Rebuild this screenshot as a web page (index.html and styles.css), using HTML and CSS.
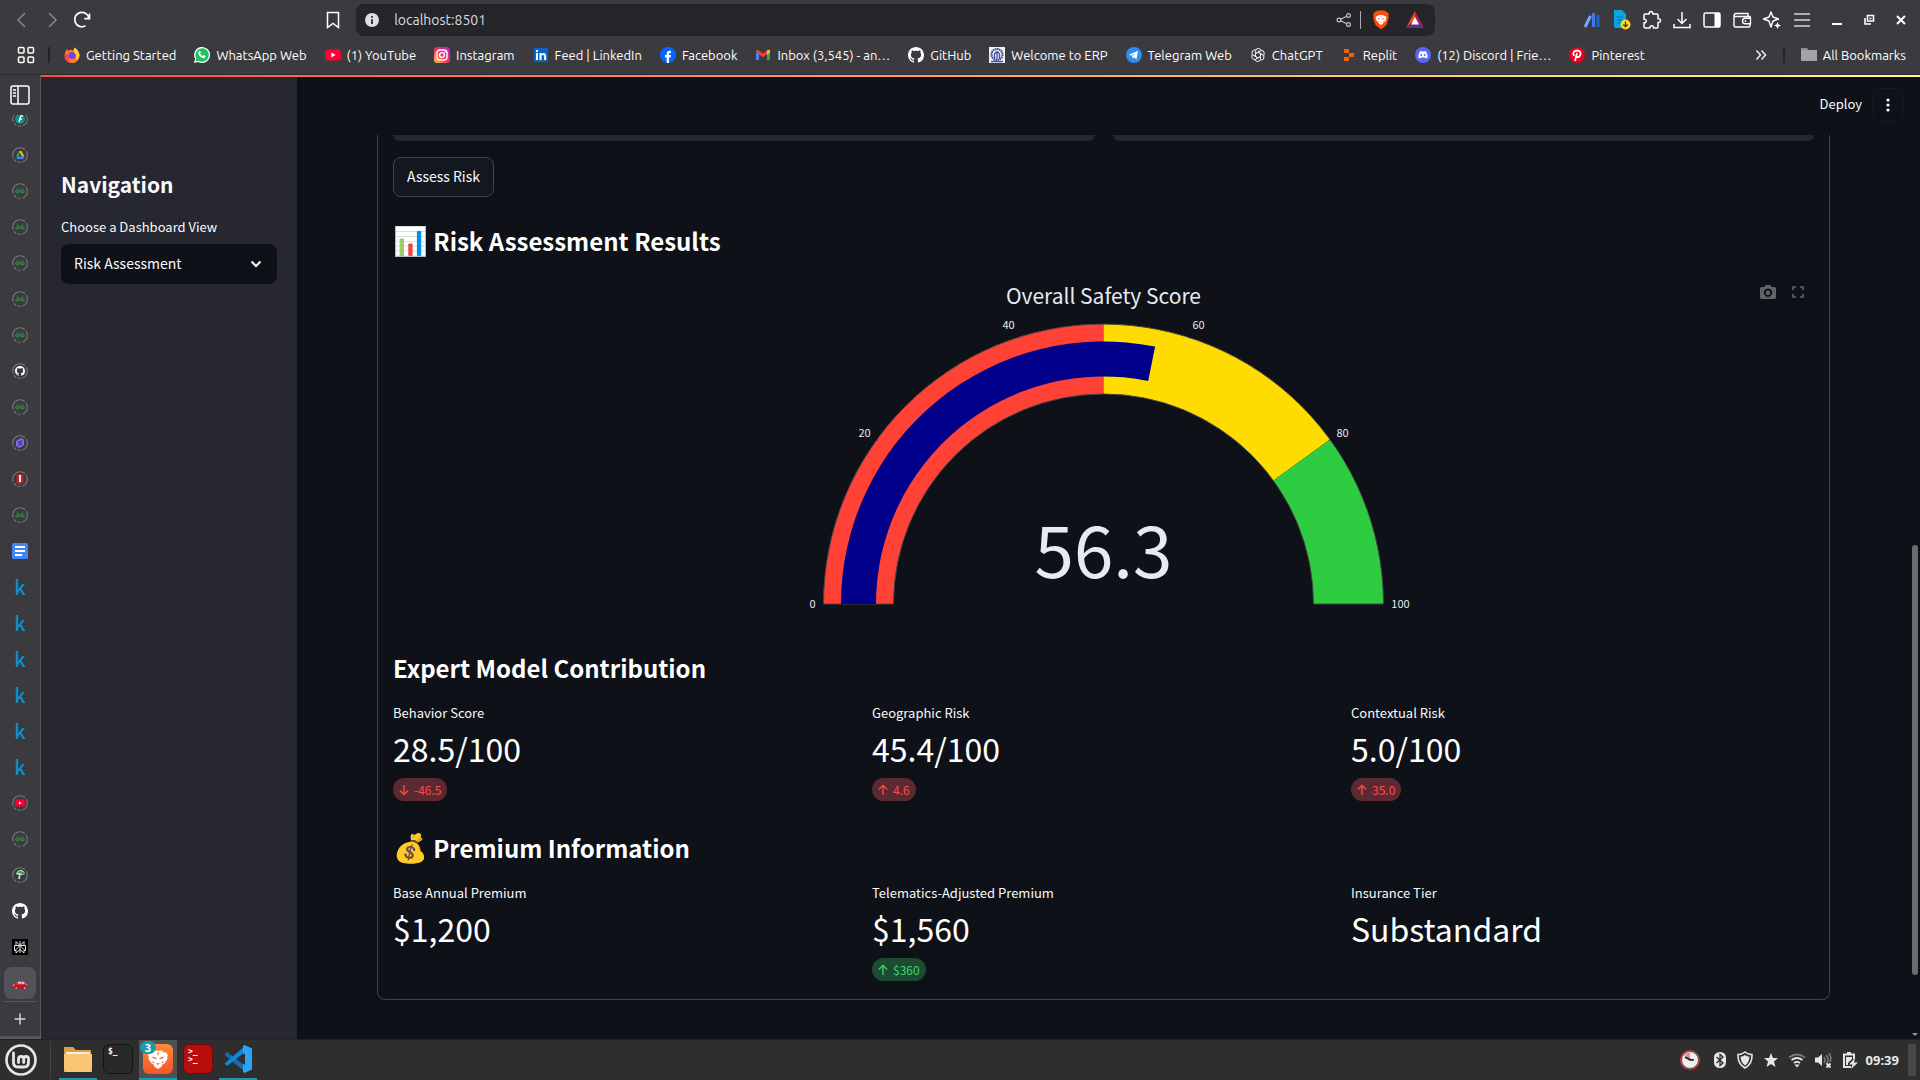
FILE: index.html
```html
<!DOCTYPE html>
<html lang="en">
<head>
<meta charset="utf-8">
<meta name="viewport" content="width=device-width, initial-scale=1">
<title>Risk Assessment</title>
<link rel="stylesheet" href="styles.css">
</head>
<body>
<svg class="sprite" aria-hidden="true">
  <symbol id="github" viewBox="0 0 16 16"><path fill="#fff" d="M8 0C3.58 0 0 3.58 0 8c0 3.54 2.29 6.53 5.47 7.59.4.07.55-.17.55-.38 0-.19-.01-.82-.01-1.49-2.01.37-2.53-.49-2.69-.94-.09-.23-.48-.94-.82-1.13-.28-.15-.68-.52-.01-.53.63-.01 1.08.58 1.23.82.72 1.21 1.87.87 2.33.66.07-.52.28-.87.51-1.07-1.78-.2-3.64-.89-3.64-3.95 0-.87.31-1.59.82-2.15-.08-.2-.36-1.02.08-2.12 0 0 .67-.21 2.2.82.64-.18 1.32-.27 2-.27s1.36.09 2 .27c1.53-1.04 2.2-.82 2.2-.82.44 1.1.16 1.92.08 2.12.51.56.82 1.27.82 2.15 0 3.07-1.87 3.75-3.65 3.95.29.25.54.73.54 1.48 0 1.07-.01 1.93-.01 2.2 0 .21.15.46.55.38A8.01 8.01 0 0 0 16 8c0-4.42-3.58-8-8-8z"/></symbol>
  <symbol id="ring" viewBox="0 0 16 16"><circle cx="8" cy="8" r="7.3" fill="none" stroke="#77777b" stroke-width="1.1" stroke-dasharray="9 1.6 3 1.6 3 1.6 20 1.6"/></symbol>
  <symbol id="gfg" viewBox="0 0 16 16"><use href="#ring"/><path fill="none" stroke="#2f8d46" stroke-width="1.1" d="M7 6.2H4.6M3.6 8h8.8M7.3 8c0 2.6-3.6 2.6-3.6 0M8.7 8c0 2.6 3.6 2.6 3.6 0M9 6.2h2.6"/></symbol>
  <symbol id="youtube" viewBox="0 0 16 16"><rect y="2.5" width="16" height="11" rx="3" fill="#ff0033"/><path fill="#fff" d="M6.4 5.6v4.8L10.6 8z"/></symbol>
  <symbol id="lion" viewBox="0 0 24 24"><path fill="#fff" d="M8 2.500L12 3.200l4-.7L18 5l2.500-.5L23 8l-1 1.500.3 2.500-3 4.500-2.500 1.500-1 2.500L12 23l-3.800-2.500-1-2.500-2.500-1.500-3-4.500.3-2.500L1 8l2.500-3.500L6 5z"/><path fill="#fb5c2d" d="M5 9.200l5 1.300.5 1.800-3.500-.8zM19 9.200l-5 1.300-.5 1.800 3.500-.8zM5 14.500l3 .8-.8 1.700zM19 14.500l-3 .8.8 1.700zM9.500 16l2.500.9 2.500-.9-2.500 2.500zM11 5h2l-1 4z"/></symbol>
  <symbol id="arrow-up" viewBox="0 0 14 14"><path fill="none" stroke="currentColor" stroke-width="1.300" d="M7 12V2.500M2.800 6.500L7 2.300l4.200 4.200"/></symbol>
  <symbol id="arrow-down" viewBox="0 0 14 14"><path fill="none" stroke="currentColor" stroke-width="1.300" d="M7 2v9.500M2.800 7.500L7 11.700l4.200-4.200"/></symbol>
</svg>

<header class="browser">
  <div class="toolbar">
    <button class="tool" aria-label="Back"><svg width="20" height="20" viewBox="0 0 20 20"><path fill="none" stroke="#87878b" stroke-width="1.500" d="M13 3l-7 7 7 7"/></svg></button>
    <button class="tool" aria-label="Forward"><svg width="20" height="20" viewBox="0 0 20 20"><path fill="none" stroke="#87878b" stroke-width="1.500" d="M7 3l7 7-7 7"/></svg></button>
    <button class="tool" aria-label="Reload"><svg width="20" height="20" viewBox="0 0 20 20"><path fill="none" stroke="#fff" stroke-width="1.700" d="M13.500 15.800A7.200 7.200 0 1 1 17 8.500M12.300 8.700h5.200V3.500"/></svg></button>
    <span class="drag-left"></span>
    <button class="tool" aria-label="Bookmark this tab"><svg width="18" height="18" viewBox="0 0 18 18"><path fill="none" stroke="#fff" stroke-width="1.500" d="M3.500 1.500h11v15L9 12.500l-5.500 4z"/></svg></button>
    <div class="address">
      <svg width="16" height="16" viewBox="0 0 16 16"><circle cx="8" cy="8" r="7" fill="#dedee1"/><path stroke="#28272c" stroke-width="1.800" d="M8 7.200V12M8 4v1.800"/></svg>
      <input class="url" aria-label="Address" value="localhost:8501">
      <svg width="16" height="16" viewBox="0 0 16 16"><g fill="none" stroke="#c5c5c8" stroke-width="1.200"><circle cx="3" cy="8" r="1.900"/><circle cx="12.500" cy="3.500" r="1.900"/><circle cx="12.500" cy="12.500" r="1.900"/><path d="M4.700 7.200l6-2.900M4.700 8.800l6 2.900"/></g></svg>
      <span class="address-rule"></span>
      <svg class="shield" width="18" height="20" viewBox="0 0 18 20"><path fill="#ff4d10" d="M3.500 1.500L6 .5h6l2.500 1L17 4l-.7 1.700.5 2L14.500 15 9 19.500 3.500 15 1.200 7.700l.5-2L1 4z"/><svg x="3" y="3" width="12" height="13"><use href="#lion"/></svg></svg>
      <svg width="20" height="18" viewBox="0 0 20 18"><path fill="#ff4724" d="M10 0v8L1 17z"/><path fill="#9e1f63" d="M10 0l9 17-9-6z"/><path fill="#5c2d91" d="M1 17l5-4h8l5 4z"/><path fill="#fff" d="M10 6l4 7.500H6z"/></svg>
    </div>
    <span class="drag-right"></span>
    <button class="tool" aria-label="Analytics"><svg width="18" height="18" viewBox="0 0 18 18"><path stroke="#75a7ff" stroke-width="3" d="M2 16L7.500 5"/><path stroke="#3d7bea" stroke-width="3" d="M10.500 2v14"/><path stroke="#2462d0" stroke-width="3" d="M15 4v12"/></svg></button>
    <button class="tool" aria-label="Document downloader"><svg width="20" height="20" viewBox="0 0 20 20"><path fill="#08a6e2" d="M2 0h8l4 4v14H4q-2 0-2-2z"/><path stroke="#0764a5" stroke-width="1.200" d="M5 7h6M5 10h5M5 13h4"/><circle cx="13.500" cy="14.500" r="5" fill="#ffd52b"/><path fill="none" stroke="#34404a" stroke-width="1.300" d="M13.500 11.500v5M11.300 14.500l2.200 2.200 2.200-2.200"/></svg></button>
    <button class="tool" aria-label="Extensions"><svg width="20" height="20" viewBox="0 0 20 20"><path fill="none" stroke="#fff" stroke-width="1.500" stroke-linejoin="round" d="M3 4h4.200C6.500.7 11.500.7 10.800 4H15q1 0 1 1v3.800c3.300-.7 3.300 4.300 0 3.600V17q0 1-1 1h-3.500c.5-3-4-3-3.500 0H3.500Q2 18 2 16.500V12.800c3 .5 3-4 0-3.500V5q0-1 1-1z"/></svg></button>
    <button class="tool" aria-label="Downloads"><svg width="20" height="20" viewBox="0 0 20 20"><path fill="none" stroke="#fff" stroke-width="1.500" d="M10 2v11M5.500 9l4.500 4.500L14.500 9M2 14v3.500h16V14"/></svg></button>
    <button class="tool" aria-label="Side panel"><svg width="20" height="20" viewBox="0 0 20 20"><rect x="2" y="3" width="16" height="14" rx="1.500" fill="none" stroke="#fff" stroke-width="1.500"/><path fill="#fff" d="M12.500 3H18v14h-5.500z"/></svg></button>
    <button class="tool" aria-label="Wallet"><svg width="20" height="20" viewBox="0 0 20 20"><path fill="none" stroke="#fff" stroke-width="1.400" d="M18 8V6.500H2.500M2.500 6.500q-1-3 1.500-3h12v3M2 5v10.500q0 1.500 1.500 1.500h13q1.500 0 1.500-1.500V14M18.500 8.200H13q-2.500.2-2.500 2.800T13 13.800h5.500z"/><circle cx="13.500" cy="11" r=".9" fill="#fff"/></svg></button>
    <button class="tool" aria-label="Leo AI"><svg width="20" height="20" viewBox="0 0 20 20"><path fill="none" stroke="#fff" stroke-width="1.400" stroke-linejoin="round" d="M9 2l2 5 5.500 2-5.500 2-2 6-2-6-5.500-2L7 7z"/><path fill="#fff" d="M15.500 12l1 2.500 2.500 1-2.500 1-1 2.500-1-2.500-2.500-1 2.500-1z"/></svg></button>
    <button class="tool" aria-label="Menu"><svg width="20" height="20" viewBox="0 0 20 20"><path stroke="#d8d8da" stroke-width="1.600" d="M2 4h16M2 10h16M2 16h16"/></svg></button>
    <div class="window-buttons">
      <button aria-label="Minimize"><svg width="12" height="12" viewBox="0 0 12 12"><path stroke="#fff" stroke-width="2" d="M1 10h10"/></svg></button>
      <button aria-label="Restore"><svg width="12" height="12" viewBox="0 0 12 12"><path fill="none" stroke="#fff" stroke-width="1.600" d="M4.500 1.500h6v5.500h-6zM2 4v6h6M6.500 4.500h2"/></svg></button>
      <button aria-label="Close"><svg width="12" height="12" viewBox="0 0 12 12"><path stroke="#fff" stroke-width="2" d="M2 2l8 8M10 2l-8 8"/></svg></button>
    </div>
  </div>

  <nav class="bookmarks" aria-label="Bookmarks">
    <button class="apps" aria-label="Tab groups"><svg width="18" height="18" viewBox="0 0 18 18"><g fill="none" stroke="#fff" stroke-width="1.500"><rect x="1.500" y="1.500" width="5.500" height="5.500" rx="1"/><rect x="11" y="1.500" width="5.500" height="5.500" rx="1"/><rect x="1.500" y="11" width="5.500" height="5.500" rx="1"/><rect x="11" y="11" width="5.500" height="5.500" rx="1"/></g></svg></button>
    <span class="rule"></span>
    <div class="bookmark-list">
      <a href="#"><svg viewBox="0 0 16 16"><path fill="#ff7b1c" d="M1 5.500L3 2l1.500 2Q7 2 9 3.500L10.500.5Q15.500 4 15.500 9a7.300 7 0 0 1-15 0z"/><circle cx="8" cy="8.500" r="3.600" fill="#7542e5"/><path fill="#ffd43b" d="M10.500.5Q15.500 4 15.500 9q-1 3-3.500 4 1.500-5-2-8z"/><path fill="#ff3560" d="M.7 7Q1 15 8 16q-5-3-3.500-8z"/></svg>Getting Started</a>
      <a href="#"><svg viewBox="0 0 16 16"><path fill="#fff" d="M0 16l1.100-4.100A8 8 0 1 1 4.200 15z"/><path fill="#1fc15b" d="M1.600 14.400l.8-2.900a6.700 6.700 0 1 1 2.200 2.200z"/><path fill="#fff" d="M5.300 3.900c.5-.2.900 0 1 .4l.5 1.300-.7.900q1 1.900 2.800 2.600l.9-1 1.700.8c0 2-1.500 2.600-3 2.200C5.700 10 4.400 7.700 4.200 6.300c0-1 .4-2 1.100-2.400z"/></svg>WhatsApp Web</a>
      <a href="#"><svg viewBox="0 0 16 16"><use href="#youtube"/></svg>(1) YouTube</a>
      <a href="#"><svg viewBox="0 0 16 16"><defs><linearGradient id="insta" x1="0" y1="1" x2="1" y2="0"><stop offset="0" stop-color="#ffd23c"/><stop offset=".45" stop-color="#ff3158"/><stop offset="1" stop-color="#a323e8"/></linearGradient></defs><rect width="16" height="16" rx="3.500" fill="url(#insta)"/><g fill="none" stroke="#fff" stroke-width="1.400"><rect x="3" y="3" width="10" height="10" rx="3"/><circle cx="8" cy="8" r="2.400"/></g><circle cx="11" cy="5" r=".8" fill="#fff"/></svg>Instagram</a>
      <a href="#"><svg viewBox="0 0 16 16"><rect x="1" y="1" width="14" height="14" fill="#0a66c2"/><path fill="#fff" d="M3 6h2v7H3zM3 3h2v2H3zM6.500 6h2v1q2-2 4 0 .7 1 .7 2.500V13h-2.100V9.500q-.3-2-1.600-1.600-1 .3-1 1.600V13h-2z"/></svg>Feed | LinkedIn</a>
      <a href="#"><svg viewBox="0 0 16 16"><circle cx="8" cy="8" r="8" fill="#0866ff"/><path fill="#fff" d="M6.700 16v-5.500H5V8h1.700V6.500q.2-3.200 4.300-2.500v2.100q-2-.4-2 1V8h2l-.4 2.500H9V16z"/></svg>Facebook</a>
      <a href="#"><svg viewBox="0 0 16 16"><path fill="#4285f4" d="M1 4l3 2.500V13H1z"/><path fill="#34a853" d="M12 6.500L15 4v9h-3z"/><path fill="#ea4335" d="M1 4q1-2 3-.5l4 3 4-3q2-1.500 3 .5v1L8 10.300 1 5z"/><path fill="#fbbc04" d="M12 3.500q2-1.500 3 .5v1.500L12 8z"/></svg>Inbox (3,545) - an…</a>
      <a href="#"><svg viewBox="0 0 16 16"><use href="#github"/></svg>GitHub</a>
      <a href="#"><svg viewBox="0 0 16 16"><path fill="#eef0f8" d="M0 0h16v16H0z"/><circle cx="8" cy="7.500" r="5.500" fill="none" stroke="#35418b" stroke-width="2" stroke-dasharray="1.500 .6"/><path fill="none" stroke="#45509b" stroke-width="1.300" d="M8 4v8M5.500 12V7q2.500-4 5 0v5M2 14.500h12"/></svg>Welcome to ERP</a>
      <a href="#"><svg viewBox="0 0 16 16"><circle cx="8" cy="8" r="8" fill="#2f8df0"/><path fill="#fff" d="M3 7.700l9-3.900-1.500 8.500-2.700-2-1.300 1.200-.4-2.200 3.500-3-4.300 2.500z"/></svg>Telegram Web</a>
      <a href="#"><svg viewBox="0 0 16 16"><g fill="none" stroke="#e8e8e8" stroke-width="1"><path id="petal" d="M5.500 9.500V4q.5-3 3.500-2.500l2.500 1.500M5.500 6.500L10 4"/><use href="#petal" transform="rotate(60 8 8)"/><use href="#petal" transform="rotate(120 8 8)"/><use href="#petal" transform="rotate(180 8 8)"/><use href="#petal" transform="rotate(240 8 8)"/><use href="#petal" transform="rotate(300 8 8)"/></g></svg>ChatGPT</a>
      <a href="#"><svg viewBox="0 0 16 16"><path fill="#f26207" d="M3 2h4q1 0 1 1v3H4Q3 6 3 5zM8 6h5v4H8zM3 10h5v3q0 1-1 1H3z"/></svg>Replit</a>
      <a href="#"><svg viewBox="0 0 16 16"><circle cx="8" cy="8" r="8" fill="#5865f2"/><path fill="#fff" d="M5 4.500l1.500-.6.4.7h2.200l.4-.7 1.500.6q2 3 1.500 6.200l-1.900.9-.6-1H6l-.6 1-1.900-.9Q3 7.500 5 4.500z"/><g fill="#5865f2"><circle cx="6.300" cy="8" r="1"/><circle cx="9.700" cy="8" r="1"/></g></svg>(12) Discord | Frie…</a>
      <a href="#"><svg viewBox="0 0 16 16"><circle cx="8" cy="8" r="8" fill="#e60023"/><path fill="none" stroke="#fff" stroke-width="1.800" d="M6 14l2-8M4.900 9Q3 4 8 3.500q4 .3 3.500 3.800-1 3.500-3.800 2.500"/></svg>Pinterest</a>
    </div>
    <button class="more" aria-label="More bookmarks"><svg width="12" height="12" viewBox="0 0 12 12"><path fill="none" stroke="#eee" stroke-width="1.500" d="M1.500 1.500L5.500 6l-4 4.500M6.500 1.500l4 4.500-4 4.500"/></svg></button>
    <span class="rule"></span>
    <a class="all" href="#"><svg viewBox="0 0 16 16"><path fill="#8e8e94" d="M0 1h6l1.500 2H16v11H0z"/><path fill="#a2a2a8" d="M0 3h16v11H0z"/></svg>All Bookmarks</a>
  </nav>
</header>

<div class="workspace">
  <nav class="rail" aria-label="Tabs">
    <button class="rail-toggle" aria-label="Expand tabs"><svg width="20" height="20" viewBox="0 0 20 20"><g fill="none" stroke="#fff" stroke-width="1.500"><rect x="1" y="1" width="18" height="18" rx="2"/><path d="M8 1v18M3 5h3M3 8h3M3 11h3"/></g></svg></button>
    <div class="tabs">
      <a href="#" aria-label="Tab"><svg viewBox="0 0 16 16"><use href="#ring"/><circle cx="8" cy="8" r="5" fill="#0a9483"/><path stroke="#fff" stroke-width="1.500" d="M7 11l2-6h2M7 8h3"/></svg></a>
      <a href="#" aria-label="Drive"><svg viewBox="0 0 16 16"><use href="#ring"/><path fill="#2ba24c" d="M7 4h2L5.500 11 4 9z"/><path fill="#ffba00" d="M7 4h2.500l3 5.500H10z"/><path fill="#4285f4" d="M5.500 9.500h7L11 12H4.500z"/></svg></a>
      <a href="#" aria-label="Tab"><svg viewBox="0 0 16 16"><use href="#gfg"/></svg></a>
      <a href="#" aria-label="Tab"><svg viewBox="0 0 16 16"><use href="#gfg"/></svg></a>
      <a href="#" aria-label="Tab"><svg viewBox="0 0 16 16"><use href="#gfg"/></svg></a>
      <a href="#" aria-label="Tab"><svg viewBox="0 0 16 16"><use href="#gfg"/></svg></a>
      <a href="#" aria-label="Tab"><svg viewBox="0 0 16 16"><use href="#gfg"/></svg></a>
      <a href="#" aria-label="GitHub"><svg viewBox="0 0 16 16"><use href="#ring"/><use href="#github" x="3" y="3" width="10" height="10"/></svg></a>
      <a href="#" aria-label="Tab"><svg viewBox="0 0 16 16"><use href="#gfg"/></svg></a>
      <a href="#" aria-label="Tab"><svg viewBox="0 0 16 16"><use href="#ring"/><path fill="#8068f0" d="M4 6l5-3 3 1.500v5.500L7.500 13 4 11z"/><path fill="none" stroke="#342a66" d="M10.500 5.500L6 7.500l4 1-4 2"/></svg></a>
      <a href="#" aria-label="Tab"><svg viewBox="0 0 16 16"><use href="#ring"/><rect x="4.500" y="3" width="7" height="10" rx="2" fill="#b52626"/><path stroke="#fff" stroke-width="1.800" d="M8 4v7"/></svg></a>
      <a href="#" aria-label="Tab"><svg viewBox="0 0 16 16"><use href="#gfg"/></svg></a>
      <a href="#" aria-label="Docs"><svg viewBox="0 0 16 16"><rect width="16" height="16" rx="1.500" fill="#4285f4"/><path stroke="#fff" stroke-width="2" d="M3 4h10M3 8h10M3 12h7"/></svg></a>
      <a href="#" class="kaggle">k</a>
      <a href="#" class="kaggle">k</a>
      <a href="#" class="kaggle">k</a>
      <a href="#" class="kaggle">k</a>
      <a href="#" class="kaggle">k</a>
      <a href="#" class="kaggle">k</a>
      <a href="#" aria-label="YouTube"><svg viewBox="0 0 16 16"><use href="#ring"/><use href="#youtube" x="3" y="3" width="10" height="10"/></svg></a>
      <a href="#" aria-label="Tab"><svg viewBox="0 0 16 16"><use href="#gfg"/></svg></a>
      <a href="#" aria-label="Tab"><svg viewBox="0 0 16 16"><use href="#ring"/><path fill="#bfe3c3" d="M4 7q1-4 5-4 4 .5 3.500 4.500L8.500 8 8 12H6l1-4z"/><path fill="#2f9e44" d="M5 5.500q3-3 7 0v2l-3-1z"/></svg></a>
      <a href="#" aria-label="GitHub"><svg viewBox="0 0 16 16"><use href="#github"/></svg></a>
      <a href="#" aria-label="Perplexity"><svg viewBox="0 0 16 16"><path d="M0 0h16v16H0z"/><path fill="none" stroke="#e8e3da" d="M8 2v12M4 2.500l4 4 4-4v4H4zM4 6.500H2.500v5H4v2.500l4-3.500 4 3.500v-2.500h1.500v-5H12M8 6.500l-4 4v1M8 6.500l4 4v1"/></svg></a>
      <a href="#" class="current" aria-label="Risk Assessment"><span class="emoji">🚗</span></a>
    </div>
    <button class="new-tab" aria-label="New tab"><svg width="12" height="12" viewBox="0 0 12 12"><path stroke="#d5d5d7" stroke-width="1.500" d="M6 .5v11M.5 6h11"/></svg></button>
  </nav>

  <div class="app">
    <aside class="sidebar">
      <h2>Navigation</h2>
      <label for="view">Choose a Dashboard View</label>
      <div class="select">
        <select id="view"><option>Risk Assessment</option></select>
        <svg width="12" height="8" viewBox="0 0 12 8"><path fill="none" stroke="#fafafa" stroke-width="2" d="M1.500 1.500L6 6l4.500-4.500"/></svg>
      </div>
    </aside>

    <main class="main">
      <div class="app-header">
        <button class="deploy">Deploy</button>
        <button class="kebab" aria-label="Main menu"><svg width="4" height="16" viewBox="0 0 4 16"><g fill="#fafafa"><circle cx="2" cy="3" r="1.600"/><circle cx="2" cy="8" r="1.600"/><circle cx="2" cy="13" r="1.600"/></g></svg></button>
      </div>
      <div class="scroll">
        <section class="card">
          <div class="fields"><span></span><span></span></div>
          <button class="assess">Assess Risk</button>
          <h3><span class="emoji">📊</span> Risk Assessment Results</h3>
          <div class="chart">
            <div class="modebar">
              <button aria-label="Download plot"><svg width="16" height="14" viewBox="0 0 16 14"><path fill="#616266" fill-rule="evenodd" d="M1.500 2H4.500L5.500 0h5l1 2h3Q16 2 16 3.500v9q0 1.500-1.500 1.500h-13Q0 14 0 12.500v-9Q0 2 1.500 2zM8 3.500a4.200 4.200 0 1 0 .01 0zM8 5.500a2.300 2.300 0 1 1-.01 0z"/></svg></button>
              <button aria-label="Fullscreen"><svg width="12" height="12" viewBox="0 0 12 12"><path fill="none" stroke="#616266" stroke-width="1.700" d="M1 4V1h3M8 1h3v3M11 8v3H8M4 11H1V8"/></svg></button>
            </div>
            <svg class="gauge" viewBox="0 0 640 350" role="img" aria-label="Overall Safety Score gauge">
              <path fill="#ff4136" d="M40 329A280 280 0 0 1 320 49V119A210 210 0 0 0 110 329z"/>
              <path fill="#ffdc00" d="M320 49A280 280 0 0 1 546.500 164.400L489.900 205.600A210 210 0 0 0 320 119z"/>
              <path fill="#2ecc40" d="M546.500 164.400A280 280 0 0 1 600 329H530A210 210 0 0 0 489.900 205.600z"/>
              <path fill="none" stroke="#444" d="M40 329A280 280 0 0 1 600 329H530A210 210 0 0 0 110 329z"/>
              <path fill="#00008b" d="M57.500 329A262.500 262.500 0 0 1 371.600 71.600L364.700 105.900A227.500 227.500 0 0 0 92.500 329z"/>
              <path stroke="#00008b" d="M35 329h5M90 162l4 3M232 58l2 5M408 58l-2 5M550 162l-4 3M600 329h5"/>
              <text class="gauge-title" x="320" y="29">Overall Safety Score</text>
              <g class="ticks">
                <text x="29" y="333">0</text><text x="81" y="162">20</text><text x="225" y="54">40</text>
                <text x="415" y="54">60</text><text x="559" y="162">80</text><text x="617" y="333">100</text>
              </g>
              <text class="score" x="320" y="303">56.3</text>
            </svg>
          </div>
          <h3>Expert Model Contribution</h3>
          <div class="metrics">
            <div class="metric"><span class="label">Behavior Score</span><span class="value">28.5/100</span><span class="delta bad"><svg><use href="#arrow-down"/></svg>-46.5</span></div>
            <div class="metric"><span class="label">Geographic Risk</span><span class="value">45.4/100</span><span class="delta bad"><svg><use href="#arrow-up"/></svg>4.6</span></div>
            <div class="metric"><span class="label">Contextual Risk</span><span class="value">5.0/100</span><span class="delta bad"><svg><use href="#arrow-up"/></svg>35.0</span></div>
          </div>
          <h3><span class="emoji">💰</span> Premium Information</h3>
          <div class="metrics">
            <div class="metric"><span class="label">Base Annual Premium</span><span class="value">$1,200</span></div>
            <div class="metric"><span class="label">Telematics-Adjusted Premium</span><span class="value">$1,560</span><span class="delta good"><svg><use href="#arrow-up"/></svg>$360</span></div>
            <div class="metric"><span class="label">Insurance Tier</span><span class="value">Substandard</span></div>
          </div>
        </section>
      </div>
      <div class="scroll-thumb"></div>
      <div class="scroll-arrow"></div>
    </main>
  </div>
</div>

<footer class="taskbar">
  <button class="mint" aria-label="Menu"><svg width="32" height="32" viewBox="0 0 32 32"><circle cx="16" cy="16" r="14.500" fill="none" stroke="#e6e6e6" stroke-width="2.600"/><path fill="none" stroke="#e6e6e6" stroke-width="2.800" stroke-linecap="round" d="M8.500 9v9.500q0 4.500 4.500 4.500h6q4.500 0 4.500-4.500V15q0-2.500-2.400-2.500T18.700 15v3.500M18.700 15q0-2.500-2.600-2.500T13.500 15v3.500"/></svg></button>
  <span class="task-rule"></span>
  <div class="tasks">
    <button class="open" aria-label="Files"><svg width="30" height="30" viewBox="0 0 30 30"><path fill="#d99f45" d="M1 3h9l3 3h15v8H1z"/><path fill="#f0eee8" d="M3 8h24v3H3z"/><path fill="#f9c570" d="M1 10h28v17q0 1-1 1H2q-1 0-1-1z"/></svg></button>
    <button aria-label="Terminal"><span class="term">$_</span></button>
    <button class="open active" aria-label="Brave"><span class="brave"><svg width="22" height="22"><use href="#lion"/></svg></span><span class="badge">3</span></button>
    <button aria-label="Terminator"><span class="term red">&gt;_<br>&gt;_</span></button>
    <button class="open" aria-label="Visual Studio Code"><svg width="28" height="28" viewBox="0 0 28 28"><path fill="#0d6fb8" d="M1 9l2-2 18 14v6L1 10z"/><path fill="#0d8ad5" d="M1 19l2 2L21 7V1L1 18z"/><path fill="#2aa4f4" d="M20.500 0L28 3.500v21L20.500 28 19 27V1z"/><path fill="#2e2e2e" d="M21 8v12l-8-6z"/></svg></button>
  </div>
  <div class="tray">
    <svg class="clock-icon" width="22" height="22" viewBox="0 0 22 22"><circle cx="11" cy="11" r="10" fill="#d33"/><circle cx="11" cy="11" r="8.500" fill="#eee" stroke="#555"/><path fill="#ef8a80" d="M11 11L5.500 6Q8 3.500 11 4z"/><path stroke="#222" stroke-width="1.500" d="M6 8l5 3h4"/></svg>
    <svg width="24" height="20" viewBox="0 0 24 20"><rect x="6" y="2" width="12" height="16" rx="5.500" fill="#e6e6e6"/><path fill="none" stroke="#2e2e2e" stroke-width="1.300" d="M8.500 7l6.500 6-3 2.500v-11l3 2.500-6.500 6"/></svg>
    <svg width="26" height="20" viewBox="0 0 26 20"><path fill="none" stroke="#e6e6e6" stroke-width="1.600" d="M13 2q3 2.500 7 2.500Q20.500 14 13 18 5.500 14 6 4.500q4 0 7-2.500z"/><path fill="#e6e6e6" d="M13 5q2 1.500 4.500 1.800Q17 13 13 15.500 9 13 8.500 6.800 11 6.500 13 5z"/></svg>
    <svg width="26" height="20" viewBox="0 0 26 20"><path fill="#e6e6e6" d="M13 3l2 5h5l-4 3.500 1.500 5.500L13 14l-4.500 3 1.500-5.500L6 8h5z"/></svg>
    <svg width="26" height="20" viewBox="0 0 26 20"><g fill="none" stroke="#e6e6e6" stroke-width="1.800"><path stroke="#777" d="M5 7.500q8-6 16 0"/><path d="M7.500 10q5.500-4 11 0M10 13q3-2.200 6 0"/></g><path fill="#e6e6e6" d="M10.500 14.500h5L13 17.500z"/></svg>
    <svg width="26" height="20" viewBox="0 0 26 20"><path fill="#e6e6e6" d="M5 7.500h3L12 4v12l-4-3.500H5z"/><path fill="none" stroke="#777" stroke-width="1.600" d="M14 7q2 3 0 6M16.500 5q3 5 0 9M19 3q3 5 1 9"/><path stroke="#e6e6e6" stroke-width="1.800" d="M16.500 13.500l4 4M20.500 13.500l-4 4"/></svg>
    <svg width="28" height="20" viewBox="0 0 28 20"><path fill="none" stroke="#e6e6e6" stroke-width="2" d="M15 17H8V4.500h10V9M11 3h4"/><path fill="#e6e6e6" d="M10 7h6v2l-4 4v2h-2zM19 8l-6 6.500h3.500L15 19l7-6.500h-4z"/></svg>
    <time>09:39</time>
    <span class="show-desktop"></span>
  </div>
</footer>
</body>
</html>
```
FILE: styles.css
```css
* { box-sizing: border-box; }

body {
  margin: 0;
  height: 100vh;
  display: grid;
  grid-template-rows: auto minmax(0, 1fr) auto;
  overflow: hidden;
  background: #0e1117;
  color: #fafafa;
  font: 14px/20px "Noto Sans CJK SC", "Source Sans Pro", sans-serif;
}

button, input, select { font: inherit; color: inherit; }
button { padding: 0; border: 0; background: none; }
a { color: inherit; text-decoration: none; }
svg { display: block; flex: none; }
.sprite { position: absolute; width: 0; height: 0; }

/* Browser chrome */
.browser {
  background: #3b3a3f;
  border-bottom: 1px solid #2a292d;
  font: 13px/20px Ubuntu, "Noto Sans", sans-serif;
  color: #fff;
}
.toolbar { display: flex; align-items: center; height: 40px; padding: 0 3px 0 7px; }
.tool { display: flex; width: 30px; height: 30px; align-items: center; justify-content: center; }
.drag-left { flex: 225 1 0; }
.drag-right { flex: 144 1 0; }
.address {
  flex: 1080 1 0;
  display: flex;
  align-items: center;
  height: 32px;
  margin-left: 8px;
  padding: 0 10px 0 8px;
  border-radius: 8px;
  background: #252429;
}
.url { flex: 1; min-width: 0; padding: 0 14px; border: 0; background: none; outline: 0; color: #dcdcde; font-size: 14px; }
.address-rule { width: 1px; height: 18px; margin: 0 11px 0 8px; background: #aaa; }
.shield { margin-right: 15px; }
.window-buttons { display: flex; margin-left: 4px; }
.window-buttons button { display: flex; width: 32px; height: 30px; align-items: center; justify-content: center; }

.bookmarks { display: flex; align-items: center; height: 34px; padding: 0 14px 4px 17px; }
.rule { width: 2px; height: 16px; background: #232226; }
.apps { margin-right: 13px; }
.bookmark-list { flex: 1; display: flex; gap: 18px; min-width: 0; overflow: hidden; margin-left: 14px; }
.bookmarks a { display: flex; align-items: center; gap: 6px; white-space: nowrap; }
.bookmarks a svg { width: 16px; height: 16px; }
.more { margin-right: 16px; }
.all { margin-left: 16px; }

/* Vertical tab strip */
.workspace { display: flex; min-height: 0; }
.rail {
  display: flex;
  flex-direction: column;
  width: 41px;
  background: #3b3a3f;
  border-right: 1px solid #59585e;
  border-bottom: 3px solid #59585e;
}
.rail-toggle { display: flex; flex: none; width: 40px; height: 40px; align-items: center; justify-content: center; }
.tabs { flex: 1; min-height: 0; display: flex; flex-direction: column; justify-content: flex-end; overflow: hidden; }
.tabs a { display: flex; flex: none; width: 40px; height: 36px; align-items: center; justify-content: center; }
.tabs svg { width: 16px; height: 16px; }
.tabs .kaggle { color: #0d8fc7; font: 500 20px/36px "Noto Sans CJK SC", sans-serif; }
.tabs .current { width: 32px; height: 32px; margin: 2px 4px; border-radius: 8px; background: #535258; }
.tabs .emoji { font-size: 13px; line-height: 16px; }
.new-tab { display: flex; flex: none; height: 35px; margin: 0 4px; border-top: 1px solid #59585e; align-items: center; justify-content: center; }

/* Application */
.app { position: relative; flex: 1; display: flex; min-width: 0; }
.app::before {
  content: "";
  position: absolute;
  z-index: 1;
  inset: 0 0 auto;
  height: 2px;
  background: linear-gradient(90deg, #ff4b4b, #fffd80);
}
.sidebar { width: 256px; flex: none; padding: 91px 20px 0; background: #262730; }
.sidebar h2 { margin: 0 0 17px; font-size: 21px; line-height: 36px; }
.sidebar label { display: block; font-size: 13px; line-height: 16px; padding-bottom: 9px; }
.select { position: relative; }
.select select {
  display: block;
  appearance: none;
  width: 100%;
  height: 40px;
  padding: 0 13px 2px;
  border: 0;
  border-radius: 8px;
  background: #0e1117;
}
.select svg { position: absolute; right: 15px; top: 16px; pointer-events: none; }

.main { position: relative; flex: 1; min-width: 0; display: flex; flex-direction: column; }
.app-header { flex: none; display: flex; height: 60px; padding-right: 16px; align-items: center; justify-content: flex-end; gap: 10px; }
.deploy { padding-bottom: 2px; font-size: 13px; }
.kebab { display: flex; width: 32px; height: 34px; border: 1px solid #15181e; border-radius: 8px; align-items: center; justify-content: center; }
.scroll { flex: 1; min-height: 0; overflow: hidden; padding: 0 90px 0 80px; }
.card { padding: 0 15px 18px; border: 1px solid #3f4146; border-top: 0; border-radius: 0 0 8px 8px; }
.fields { display: grid; grid-template-columns: 1fr 1fr; gap: 18px; margin-bottom: 16px; }
.fields span { height: 6px; border-radius: 0 0 8px 8px; background: #262730; }
.assess { height: 40px; padding: 0 13px 2px; border: 1px solid #41444c; border-radius: 8px; background: #131720; }
h3 { margin: 0; font-size: 24px; line-height: 36px; color: #fff; }
.assess + h3 { margin-top: 26px; }
.emoji { font-family: "Noto Color Emoji", sans-serif; font-weight: 400; font-size: 28px; line-height: 0; }

.chart { position: relative; height: 350px; margin: 16px 0 25px; }
.gauge { width: 100%; height: 100%; }
.gauge text { fill: #e6eaf1; text-anchor: middle; }
.gauge-title { font-size: 21px; }
.ticks { font-size: 11px; }
.score { font-size: 71px; }
.modebar { position: absolute; top: 10px; right: 10px; display: flex; gap: 16px; align-items: center; }

.metrics { display: grid; grid-template-columns: repeat(3, 1fr); gap: 16px; margin-top: 17px; }
.metric { display: flex; flex-direction: column; align-items: flex-start; }
.metrics + h3 { margin-top: 29px; }
.label { font-size: 13px; line-height: 20px; }
.value { margin: 2px 0 7px; font-size: 32px; line-height: 46px; color: #fff; }
.delta { display: flex; align-items: center; gap: 3px; height: 23px; padding: 0 6px 0 4px; border-radius: 12px; font-size: 12px; }
.delta svg { width: 14px; height: 14px; }
.bad { background: #5b2a30; color: #ff4b4b; }
.good { background: #1c4b31; color: #3dd56d; }

.scroll-thumb { position: absolute; right: 2px; top: 48.8%; width: 6px; height: 44.6%; border-radius: 3px; background: #6c6c6e; }
.scroll-arrow { position: absolute; right: 2px; bottom: 3px; border: 3px solid transparent; border-top-color: #929295; border-bottom: 0; }

/* Desktop panel */
.taskbar { display: flex; align-items: center; height: 41px; background: #2e2e2e; border-top: 1px solid #222; padding: 0 4px 0 5px; }
.task-rule { width: 1px; height: 38px; margin: 0 8px 0 13px; background: #454545; }
.tasks { display: flex; gap: 2px; flex: 1; }
.tasks button { position: relative; display: flex; width: 38px; height: 40px; align-items: center; justify-content: center; border-bottom: 2px solid transparent; }
.tasks .open { border-color: #1f9aa8; }
.tasks .active { background: #505050; }
.term { width: 30px; height: 30px; padding: 3px 4px; border: 1px solid #151515; border-radius: 6px; background: #292929; color: #fff; font: bold 8px/8px "DejaVu Sans Mono", monospace; text-align: left; }
.red { background: #b90d0d; border-color: #740606; }
.brave { display: flex; width: 30px; height: 30px; border-radius: 6px; align-items: center; justify-content: center; background: linear-gradient(#ff8b36, #f2562a); }
.badge { position: absolute; left: 1px; top: 1px; width: 16px; height: 13px; border-radius: 7px; background: #1f9aa8; color: #fff; font: bold 11px/13px "Noto Sans", sans-serif; }
.tray { display: flex; align-items: center; }
.clock-icon { margin-right: 7px; }
.tray time { margin: 0 9px 0 2px; color: #e9e9e9; font: bold 13px/20px "Noto Sans", sans-serif; }
.show-desktop { width: 8px; height: 32px; background: #484848; }
```
